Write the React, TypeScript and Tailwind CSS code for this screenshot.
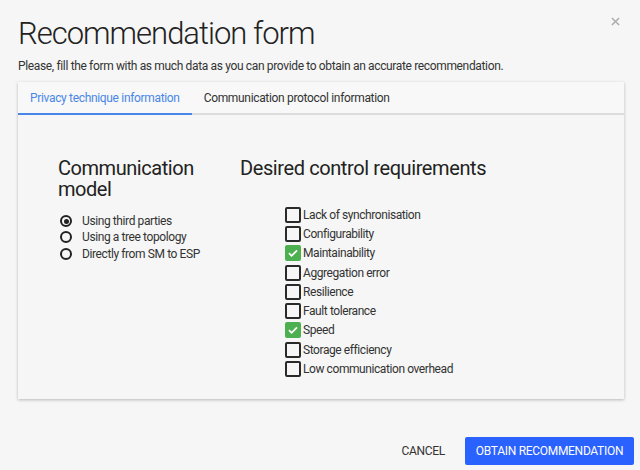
import { useState } from 'react'

const requirements = [
  { label: 'Lack of synchronisation', checked: false },
  { label: 'Configurability', checked: false },
  { label: 'Maintainability', checked: true },
  { label: 'Aggregation error', checked: false },
  { label: 'Resilience', checked: false },
  { label: 'Fault tolerance', checked: false },
  { label: 'Speed', checked: true },
  { label: 'Storage efficiency', checked: false },
  { label: 'Low communication overhead', checked: false },
]

const models = ['Using third parties', 'Using a tree topology', 'Directly from SM to ESP']

export default function App() {
  const [tab, setTab] = useState(0)
  const [model, setModel] = useState(0)
  const [checks, setChecks] = useState(requirements.map((r) => r.checked))

  return (
    <div className="relative w-[640px] h-[470px] bg-[#f5f6f5] text-[#222] overflow-hidden" style={{ fontFamily: 'Roboto, "Noto Sans", sans-serif' }}>
      <button aria-label="Close" className="absolute right-[20px] top-[17px] text-[#aaa] leading-none">
        <svg width="9" height="9" viewBox="0 0 10 10" stroke="currentColor" strokeWidth="1.6">
          <path d="M1 1l8 8M9 1l-8 8" />
        </svg>
      </button>

      <div className="px-[18px] pt-[14px]">
        <h1 className="text-[31px] font-light leading-[40px] text-[#222] tracking-[-1px]">Recommendation form</h1>
        <p className="text-[12px] leading-[16px] mt-[4px] text-[#333] tracking-[-0.35px]">
          Please, fill the form with as much data as you can provide to obtain an accurate recommendation.
        </p>

        <div className="mt-[8px] w-[606px] h-[317px] bg-[#f5f6f5] shadow-[0_1px_3px_rgba(0,0,0,0.25)]">
          <div className="flex h-[33px] border-b-2 border-[#dcdcdc] bg-[#f7f8f7]">
            {['Privacy technique information', 'Communication protocol information'].map((t, i) => (
              <button
                key={t}
                onClick={() => setTab(i)}
                className={
                  'px-[12px] text-[12px] tracking-[-0.33px] -mb-[2px] border-b-2 whitespace-nowrap ' +
                  (tab === i ? 'text-[#4a86e8] border-[#4a86e8]' : 'text-[#333] border-transparent')
                }
              >
                {t}
              </button>
            ))}
          </div>

          <div className="flex pt-[43px] pl-[40px]">
            <div className="w-[182px]">
              <h2 className="text-[20px] leading-[21px] text-[#222] tracking-[-0.45px]">Communication<br />model</h2>
              <div className="mt-[13px] flex flex-col">
                {models.map((m, i) => (
                  <label key={m} className="flex items-center h-[16.3px] cursor-pointer" onClick={() => setModel(i)}>
                    <span className="w-[12px] h-[12px] rounded-full border-2 border-[#222] flex items-center justify-center ml-[2px]">
                      {model === i && <span className="w-[5px] h-[5px] rounded-full bg-[#222]" />}
                    </span>
                    <span className="ml-[10px] text-[12px] text-[#333] tracking-[-0.4px]">{m}</span>
                  </label>
                ))}
              </div>
            </div>

            <div>
              <h2 className="text-[20px] leading-[21px] text-[#222] tracking-[-0.4px]">Desired control requirements</h2>
              <div className="mt-[26px] ml-[45px] flex flex-col">
                {requirements.map((r, i) => (
                  <label
                    key={r.label}
                    className="flex items-center h-[19.3px] cursor-pointer"
                    onClick={() => setChecks(checks.map((c, j) => (j === i ? !c : c)))}
                  >
                    {checks[i] ? (
                      <span className="w-[16px] h-[16px] rounded-[2px] bg-[#4caf50] flex items-center justify-center">
                        <svg width="12" height="12" viewBox="0 0 12 12" fill="none" stroke="white" strokeWidth="1.8">
                          <path d="M2 6.2l2.6 2.6L10 3.4" />
                        </svg>
                      </span>
                    ) : (
                      <span className="w-[16px] h-[16px] rounded-[2px] border-2 border-[#2a2a2a]" />
                    )}
                    <span className="ml-[2px] text-[12px] text-[#333] tracking-[-0.42px]">{r.label}</span>
                  </label>
                ))}
              </div>
            </div>
          </div>
        </div>
      </div>

      <div className="absolute right-[6px] bottom-[5px] flex items-center gap-[12px]">
        <button className="px-[8px] h-[28px] text-[12px] text-[#333] uppercase tracking-[-0.3px]">Cancel</button>
        <button className="h-[28px] w-[169px] rounded-[2px] bg-[#2962ff] text-[12px] text-white uppercase whitespace-nowrap tracking-[-0.3px]">
          Obtain recommendation
        </button>
      </div>
    </div>
  )
}
